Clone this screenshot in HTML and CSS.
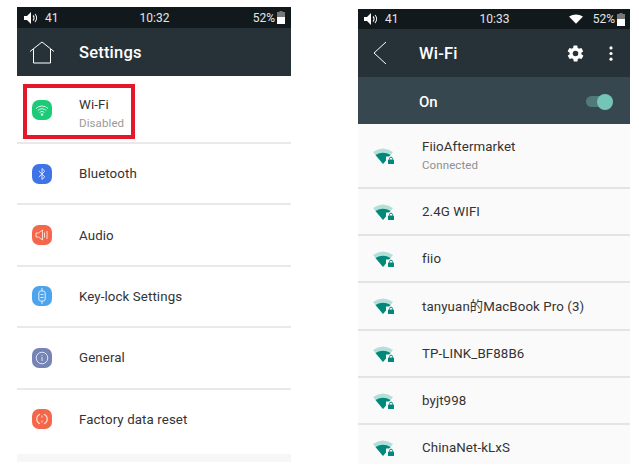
FILE: index.html
```html
<!DOCTYPE html>
<html lang="en">
<head>
<meta charset="utf-8">
<title>Settings and Wi-Fi</title>
<link rel="stylesheet" href="styles.css">
</head>
<body>
<main class="page">
  <section class="phone phone-left">
    <div class="status">
      <div class="status-l"><svg class="vol" viewBox="0 0 14 12"><path d="M0 4h3l4-4v12L3 8H0z" fill="#fff"/><path d="M9 3.500a3.500 3.500 0 0 1 0 5M11 2a6 6 0 0 1 0 8" fill="none" stroke="#fff" stroke-width="1.100"/></svg><span>41</span></div>
      <div class="status-c">10:32</div>
      <div class="status-r"><span>52%</span><svg class="batt" viewBox="0 0 8 13"><path d="M2.500 0h3v1H8v12H0V1h2.500z" fill="#777"/><path d="M0 6h8v7H0z" fill="#fff"/></svg></div>
    </div>
    <header class="bar bar-left">
      <svg class="home" viewBox="0 0 26 23"><path d="M1 10.500 13 1l12 9.500M4.500 8v14h17V8" fill="none" stroke="#fff" stroke-width="1"/></svg>
      <h1 class="title">Settings</h1>
    </header>
    <ul class="menu">
      <li class="menu-row menu-first">
        <span class="tile tile-green"><svg viewBox="0 0 20 20"><path d="M4 8.500a8.500 8.500 0 0 1 12 0M5.800 10.500a6 6 0 0 1 8.400 0M7.600 12.400a3.500 3.500 0 0 1 4.800 0" fill="none" stroke="#d8f5e6" stroke-width="1"/><circle cx="10" cy="14.500" r="1.200" fill="#d8f5e6"/></svg></span>
        <div class="menu-text"><div class="menu-name">Wi-Fi</div><div class="menu-sub">Disabled</div></div>
      </li>
      <li class="menu-row">
        <span class="tile tile-blue"><svg viewBox="0 0 20 20"><path d="M6.800 7l6 5.800L10 15.500v-11l2.800 2.700-6 5.800" fill="none" stroke="#dbe6ff" stroke-width="1"/></svg></span>
        <div class="menu-name">Bluetooth</div>
      </li>
      <li class="menu-row">
        <span class="tile tile-orange"><svg viewBox="0 0 20 20"><path d="M4 8h2.500L10.500 5v10l-4-3H4zM12.500 7.500v5M15 6v8" fill="none" stroke="#ffd9cf" stroke-width="1"/></svg></span>
        <div class="menu-name">Audio</div>
      </li>
      <li class="menu-row">
        <span class="tile tile-sky"><svg viewBox="0 0 20 20"><path d="M10 2v3M10 15v3" stroke="#dcefff" stroke-width="1"/><rect x="6.800" y="5" width="6.400" height="10" rx="2" fill="none" stroke="#dcefff" stroke-width="1"/><path d="M8.500 8.500h3M8.500 11.500h3" stroke="#dcefff" stroke-width="1"/></svg></span>
        <div class="menu-name">Key-lock Settings</div>
      </li>
      <li class="menu-row">
        <span class="tile tile-slate"><svg viewBox="0 0 20 20"><circle cx="10" cy="10" r="5.800" fill="none" stroke="#dfe4f5" stroke-width="1"/><path d="M10 9v4M10 7v1" stroke="#dfe4f5" stroke-width="1"/></svg></span>
        <div class="menu-name">General</div>
      </li>
      <li class="menu-row menu-last">
        <span class="tile tile-orange"><svg viewBox="0 0 20 20"><path d="M8 5.200a5.200 5.200 0 0 0 0 9.600M12 5.200a5.200 5.200 0 0 1 0 9.600" fill="none" stroke="#ffe0d6" stroke-width="1.200"/><path d="M10 6.500v2M10 11.500v2" stroke="#ffe0d6" stroke-width="1"/></svg></span>
        <div class="menu-name">Factory data reset</div>
      </li>
    </ul>
    <div class="foot-band"></div>
    <div class="highlight"></div>
  </section>

  <section class="phone phone-right">
    <div class="status">
      <div class="status-l"><svg class="vol" viewBox="0 0 14 12"><path d="M0 4h3l4-4v12L3 8H0z" fill="#fff"/><path d="M9 3.500a3.500 3.500 0 0 1 0 5M11 2a6 6 0 0 1 0 8" fill="none" stroke="#fff" stroke-width="1.100"/></svg><span>41</span></div>
      <div class="status-c">10:33</div>
      <div class="status-r"><svg class="wifi-s" viewBox="0 0 16 11"><path d="M0 2.500Q8-2 16 2.500L8 11z" fill="#fff"/></svg><span>52%</span><svg class="batt" viewBox="0 0 8 13"><path d="M2.500 0h3v1H8v12H0V1h2.500z" fill="#777"/><path d="M0 6h8v7H0z" fill="#fff"/></svg></div>
    </div>
    <header class="bar bar-right">
      <svg class="back" viewBox="0 0 14 24"><path d="M13 1 1 12l12 11" fill="none" stroke="#fff" stroke-width="1"/></svg>
      <h1 class="title">Wi-Fi</h1>
      <svg class="gear" viewBox="0 0 24 24"><path fill="#fff" d="M19.400 13a7.500 7.500 0 0 0 0-2l2.100-1.600a.5.500 0 0 0 .1-.6l-2-3.500a.5.500 0 0 0-.6-.2l-2.500 1a7.500 7.500 0 0 0-1.700-1l-.4-2.700a.5.500 0 0 0-.5-.4h-4a.5.500 0 0 0-.5.400l-.4 2.700a7.500 7.500 0 0 0-1.700 1l-2.500-1a.5.500 0 0 0-.6.200l-2 3.500a.5.500 0 0 0 .1.600L4.600 11a7.500 7.500 0 0 0 0 2l-2.100 1.600a.5.500 0 0 0-.1.600l2 3.500a.5.500 0 0 0 .6.200l2.500-1a7.500 7.500 0 0 0 1.700 1l.4 2.700a.5.500 0 0 0 .5.400h4a.5.500 0 0 0 .5-.4l.4-2.700a7.500 7.500 0 0 0 1.700-1l2.500 1a.5.500 0 0 0 .6-.2l2-3.500a.5.500 0 0 0-.1-.6zM12 15.500a3.500 3.500 0 1 1 0-7 3.500 3.500 0 0 1 0 7z"/></svg>
      <svg class="dots" viewBox="0 0 4 16"><circle cx="2" cy="2" r="1.700" fill="#fff"/><circle cx="2" cy="8" r="1.700" fill="#fff"/><circle cx="2" cy="14" r="1.700" fill="#fff"/></svg>
    </header>
    <div class="onbar">
      <span class="on-label">On</span>
      <span class="toggle"><span class="knob"></span></span>
    </div>
    <ul class="nets">
      <li class="net net-first">
        <svg class="sig" viewBox="0 0 22 17"><use href="#sig"/></svg>
        <div><div class="net-name">FiioAftermarket</div><div class="net-sub">Connected</div></div>
      </li>
      <li class="net"><svg class="sig" viewBox="0 0 22 17"><use href="#sig"/></svg><div class="net-name">2.4G WIFI</div></li>
      <li class="net"><svg class="sig" viewBox="0 0 22 17"><use href="#sig"/></svg><div class="net-name">fiio</div></li>
      <li class="net"><svg class="sig" viewBox="0 0 22 17"><use href="#sig"/></svg><div class="net-name">tanyuan的MacBook Pro (3)</div></li>
      <li class="net"><svg class="sig" viewBox="0 0 22 17"><use href="#sig"/></svg><div class="net-name">TP-LINK_BF88B6</div></li>
      <li class="net"><svg class="sig" viewBox="0 0 22 17"><use href="#sig"/></svg><div class="net-name">byjt998</div></li>
      <li class="net net-last"><svg class="sig" viewBox="0 0 22 17"><use href="#sig"/></svg><div class="net-name">ChinaNet-kLxS</div></li>
    </ul>
  </section>
</main>
<svg class="defs" width="0" height="0" aria-hidden="true"><defs><g id="sig"><path d="M0 5Q10-2 20 5L10 17z" fill="#b2dfd8"/><path d="M2.500 8Q10 3.500 17.500 8L10 17z" fill="#00897b"/><rect x="13" y="9.500" width="9" height="7.500" fill="#fafafa"/><rect x="15" y="12.500" width="6" height="4.500" rx=".6" fill="#00897b"/><path d="M16.500 12.500v-.8a1.500 1.500 0 0 1 3 0v.8" fill="none" stroke="#00897b"/></g></defs></svg>
</body>
</html>
```

FILE: styles.css
```css
* { box-sizing: border-box; }
html, body { margin: 0; padding: 0; background: #fff; }
body { width: 639px; height: 473px; overflow: hidden; font-family: Roboto, "Noto Sans CJK SC", sans-serif; }
ul { list-style: none; margin: 0; padding: 0; }
h1 { margin: 0; }

.page { display: flex; align-items: flex-start; padding-left: 17px; gap: 67px; }
.phone { position: relative; }
.phone-left { width: 274px; margin-top: 7px; }
.phone-right { width: 272px; margin-top: 9px; }

.status { display: grid; grid-template-columns: 1fr auto 1fr; align-items: center; height: 21px; background: #12191c; color: #e4e6e7; font-size: 12px; padding: 0 6px 0 7px; }
.phone-right .status { height: 20px; padding: 0 5px 0 6px; }
.status-l { display: flex; align-items: center; gap: 7px; }
.status-r { display: flex; align-items: center; justify-content: flex-end; gap: 2px; }
.vol { width: 14px; height: 12px; }
.batt { width: 8px; height: 13px; }
.wifi-s { width: 14px; height: 10px; margin-right: 8px; }

.bar { display: flex; align-items: center; height: 48px; background: #263238; color: #fff; }
.bar-left { padding-left: 12px; }
.home { width: 26px; height: 23px; margin-right: 24px; }
.bar-right { padding-left: 15px; }
.title { font-size: 16.500px; font-weight: 500; letter-spacing: 0.2px; }
.back { width: 14px; height: 24px; margin-right: 32px; }
.gear { width: 19px; height: 19px; margin-left: auto; }
.dots { width: 4px; height: 15px; margin-left: 24px; margin-right: 17px; }

.menu-row { display: flex; align-items: center; height: 61.400px; padding-left: 15px; border-bottom: 2px solid #e9e9e9; }
.menu-first { height: 68px; padding-top: 2px; }
.menu-last { border-bottom: 0; height: 64px; padding-bottom: 5px; }
.menu-text { margin-top: 6px; }
.tile { flex: none; width: 20px; height: 20px; border-radius: 7px; margin-right: 27px; display: block; }
.tile svg { display: block; width: 20px; height: 20px; }
.tile-green { background: #1ccb78; }
.tile-blue { background: #3f73e8; }
.tile-orange { background: #f4674a; }
.tile-sky { background: #4ea4ec; }
.tile-slate { background: #7583b5; }
.menu-name { font-size: 13.300px; color: #333; letter-spacing: 0.1px; }
.menu-sub { font-size: 11.500px; color: #9a9a9a; margin-top: 4px; letter-spacing: 0.1px; }
.foot-band { height: 8px; background: #f7f7f7; }

.highlight { position: absolute; left: 6px; top: 77px; width: 112px; height: 55px; border: 4px solid #e4172b; }

.onbar { display: flex; align-items: center; justify-content: space-between; height: 47px; background: #37474f; padding: 2px 17px 0 61px; }
.on-label { color: #fff; font-size: 15px; font-weight: 500; }
.toggle { position: relative; display: block; width: 27px; height: 11px; border-radius: 6px; background: #4f7a78; }
.knob { position: absolute; right: 0; top: -2.500px; width: 16px; height: 16px; border-radius: 50%; background: #74c5b7; }

.nets { background: #fafafa; }
.net { display: flex; align-items: center; height: 47.200px; padding-left: 15px; border-bottom: 2px solid #e4e4e4; }
.net-first { height: 65px; }
.net-last { height: 39px; padding-top: 6px; border-bottom: 0; }
.sig { flex: none; width: 22px; height: 17px; margin-right: 27px; }
.net-name { font-size: 13.300px; color: #333; letter-spacing: 0.1px; }
.net-sub { font-size: 11.500px; color: #8f8f8f; margin-top: 4px; letter-spacing: 0.1px; }
.defs { position: absolute; }
```
